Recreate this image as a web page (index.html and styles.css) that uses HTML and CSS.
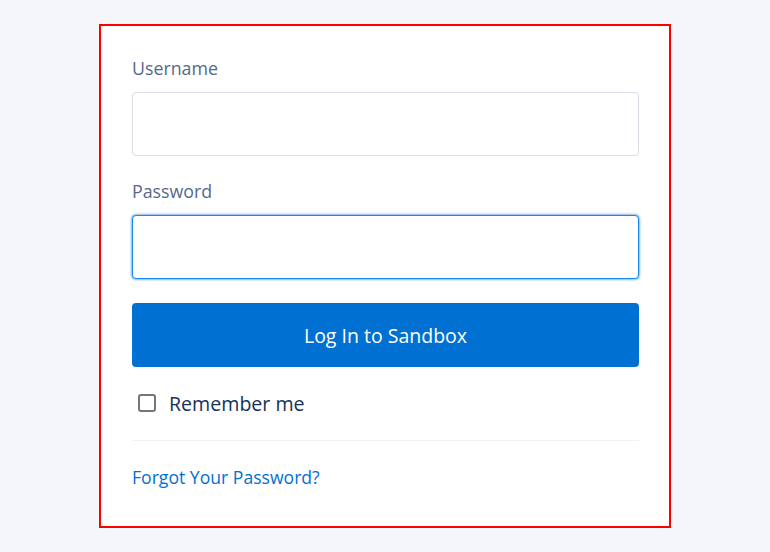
FILE: index.html
```html
<!DOCTYPE html>
<html lang="en">
<head>
<meta charset="utf-8">
<title>Login</title>
<link rel="stylesheet" href="styles.css">
</head>
<body>
<div class="card">
  <label class="label">Username</label>
  <div class="input"></div>
  <label class="label label-pw">Password</label>
  <div class="input input-focus"></div>
  <button class="btn">Log In to Sandbox</button>
  <div class="remember">
    <span class="checkbox"></span>
    <span class="remember-text">Remember me</span>
  </div>
  <div class="divider"></div>
  <a class="forgot">Forgot Your Password?</a>
</div>
</body>
</html>
```
FILE: styles.css
```css
html, body {
  margin: 0;
  padding: 0;
  background: #f4f6f9;
  font-family: "Open Sans", "Noto Sans", sans-serif;
}
.card {
  box-sizing: border-box;
  width: 572px;
  height: 504px;
  margin: 24px auto 0;
  background: #fff;
  border: 2px solid #ff0000;
  padding: 30px 30px 0 31px;
  display: flex;
  flex-direction: column;
}
.label {
  display: block;
  font-size: 17.8px;
  line-height: 24px;
  color: #54698d;
  margin-bottom: 12px;
}
.label-pw {
  margin-top: 23px;
}
.input {
  box-sizing: border-box;
  height: 64px;
  border: 1px solid #d8dde6;
  border-radius: 4px;
  background: #fff;
}
.input-focus {
  border-color: #1589ee;
  box-shadow: 0 0 3px #0070d2;
}
.btn {
  height: 64px;
  margin-top: 24px;
  border: 0;
  border-radius: 4px;
  background: #0070d2;
  color: #fff;
  font-family: inherit;
  font-size: 19.5px;
  padding: 0;
}
.remember {
  display: flex;
  align-items: center;
  margin-top: 26px;
  padding-left: 6px;
  height: 20px;
}
.checkbox {
  box-sizing: border-box;
  width: 18px;
  height: 18px;
  border: 2px solid #767676;
  border-radius: 3px;
}
.remember-text {
  margin-left: 13px;
  font-size: 19.6px;
  color: #16325c;
}
.divider {
  height: 1px;
  background: #eef1f5;
  margin-top: 27px;
}
.forgot {
  margin-top: 25px;
  font-size: 17.6px;
  line-height: 22px;
  color: #0070d2;
}
```
